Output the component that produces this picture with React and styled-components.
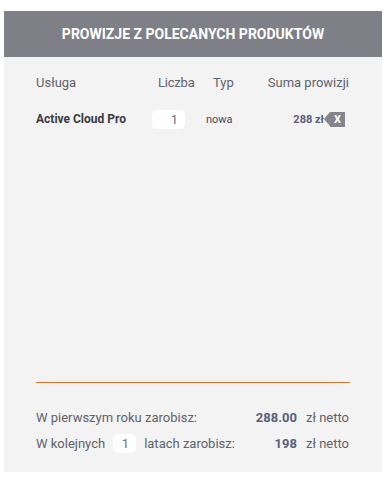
import styled, { createGlobalStyle } from 'styled-components'

const GlobalStyle = createGlobalStyle`
  body {
    margin: 0;
    background: #ffffff;
    font-family: Roboto, "Noto Sans", sans-serif;
  }
`

const Page = styled.div`
  padding: 11px 0 0 4px;
`

const Panel = styled.section`
  width: 378px;
  height: 461px;
  background: #f3f3f3;
  display: flex;
  flex-direction: column;
`

const Header = styled.h2`
  margin: 0;
  height: 46px;
  background: #7f7f87;
  color: #ffffff;
  font-size: 14px;
  font-weight: 700;
  letter-spacing: 0;
  display: flex;
  align-items: center;
  justify-content: center;
  text-transform: uppercase;
`

const Body = styled.div`
  flex: 1;
  display: flex;
  flex-direction: column;
  padding: 0 33px 0 32px;
`

const Grid = styled.div`
  display: grid;
  grid-template-columns: 116px 51px 63px 1fr;
  align-items: center;
`

const HeadRow = styled(Grid)`
  height: 30px;
  margin-top: 10px;
  color: #62626c;
  font-size: 13px;
`

const HeadCell = styled.div`
  text-align: ${p => p.$align || 'left'};
  padding-left: ${p => p.$pad || 0}px;
  letter-spacing: ${p => p.$ls || 0}px;
`

const ItemRow = styled(Grid)`
  height: 26px;
  margin-top: 9px;
  font-size: 11px;
  color: #4a4a55;
`

const Name = styled.div`
  font-weight: 700;
  font-size: 12px;
  color: #3a3a44;
`

const TypeCell = styled.div`
  padding-left: 3px;
`

const NumberBox = styled.div`
  width: ${p => p.$w}px;
  height: 19px;
  background: #ffffff;
  border-radius: 5px;
  box-sizing: border-box;
  padding-right: ${p => p.$pr || 7}px;
  display: flex;
  align-items: center;
  justify-content: flex-end;
  color: #6e6e8c;
  font-size: 13px;
`

const Sum = styled.div`
  display: flex;
  align-items: center;
  justify-content: flex-end;
  margin-right: 4px;
`

const Amount = styled.span`
  font-weight: 700;
  color: #5a6079;
  font-size: 11px;
`

const RemoveTag = styled.span`
  position: relative;
  margin-left: 6px;
  width: 15px;
  height: 15px;
  background: #84848a;
  color: #ffffff;
  font-size: 11px;
  font-weight: 700;
  display: flex;
  align-items: center;
  justify-content: center;

  &::before {
    content: '';
    position: absolute;
    left: -6px;
    top: 0;
    border-style: solid;
    border-width: 7.5px 6px 7.5px 0;
    border-color: transparent #84848a transparent transparent;
  }
`

const Spacer = styled.div`
  flex: 1;
`

const Divider = styled.hr`
  margin: 0;
  border: 0;
  height: 1px;
  background: #e0702c;
  margin-right: -1px;
`

const Summary = styled.div`
  padding: 24px 0 19px;
  display: flex;
  flex-direction: column;
  gap: 6px;
`

const SummaryRow = styled.div`
  height: 20px;
  display: flex;
  align-items: center;
  font-size: 13px;
  color: #62626c;
  gap: 8px;
`

const Value = styled.span`
  margin-left: auto;
  font-weight: 700;
  color: #5a6079;
`

const Unit = styled.span`
  margin-left: 1px;
`

const App = () => (
  <Page>
    <GlobalStyle />
    <Panel>
      <Header>Prowizje z polecanych produktów</Header>
      <Body>
        <HeadRow>
          <HeadCell>Usługa</HeadCell>
          <HeadCell $pad={6} $ls={-0.2}>Liczba</HeadCell>
          <HeadCell $pad={10}>Typ</HeadCell>
          <HeadCell $align="right">Suma prowizji</HeadCell>
        </HeadRow>
        <ItemRow>
          <Name>Active Cloud Pro</Name>
          <NumberBox $w={33}>1</NumberBox>
          <TypeCell>nowa</TypeCell>
          <Sum>
            <Amount>288 zł</Amount>
            <RemoveTag>X</RemoveTag>
          </Sum>
        </ItemRow>
        <Spacer />
        <Divider />
        <Summary>
          <SummaryRow>
            <span>W pierwszym roku zarobisz:</span>
            <Value>288.00</Value>
            <Unit>zł netto</Unit>
          </SummaryRow>
          <SummaryRow>
            <span>W kolejnych</span>
            <NumberBox $w={23} $pr={7}>1</NumberBox>
            <span>latach zarobisz:</span>
            <Value>198</Value>
            <Unit>zł netto</Unit>
          </SummaryRow>
        </Summary>
      </Body>
    </Panel>
  </Page>
)

export default App
